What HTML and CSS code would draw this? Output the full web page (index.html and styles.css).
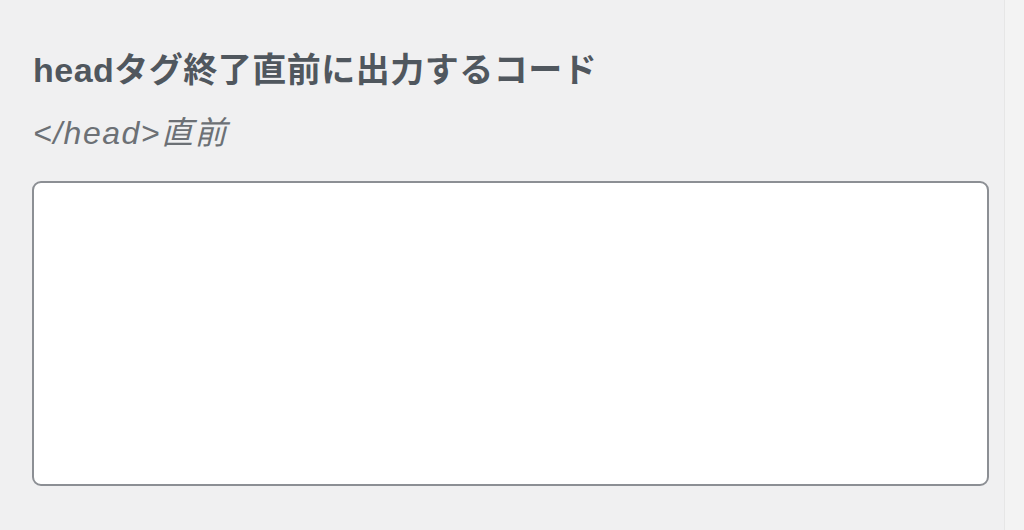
FILE: index.html
```html
<!DOCTYPE html>
<html lang="ja">
<head>
<meta charset="UTF-8">
<meta name="viewport" content="width=device-width, initial-scale=1.0">
<title>headタグ終了直前に出力するコード</title>
<link rel="stylesheet" href="styles.css">
</head>
<body>
    <div class="page">
        <div class="panel">
            <label class="field-title" for="headCode">headタグ終了直前に出力するコード</label>
            <p class="field-desc">&lt;/head&gt;直前</p>
            <textarea id="headCode" class="code-box" name="head_code"></textarea>
        </div>
        <div class="scroll-strip"></div>
    </div>
</body>
</html>
```

FILE: styles.css
```css
html, body {
    margin: 0;
    height: 100%;
}
body {
    font-family: "Liberation Sans", "Noto Sans CJK JP", sans-serif;
    background-color: #f0f0f1;
    overflow: hidden;
}
.page {
    display: flex;
    height: 100%;
}
.panel {
    flex: 1;
    padding: 48px 15px 0 32px;
    display: flex;
    flex-direction: column;
}
.field-title {
    display: block;
    font-size: 34px;
    font-weight: 700;
    color: #50575e;
    line-height: 44px;
    letter-spacing: 0.5px;
    padding-left: 1px;
}
.field-desc {
    margin: 20px 0 0;
    font-size: 32px;
    font-style: italic;
    color: #6c7075;
    line-height: 42px;
    letter-spacing: 1.5px;
    padding-left: 1px;
}
.code-box {
    display: block;
    margin-top: 27px;
    width: 100%;
    height: 305px;
    box-sizing: border-box;
    border: 2px solid #8c8f94;
    border-radius: 9px;
    background-color: #fff;
    resize: none;
    outline: none;
}
.scroll-strip {
    width: 19px;
    border-left: 1px solid #e6e6e6;
    background-color: #f3f3f3;
}
```
